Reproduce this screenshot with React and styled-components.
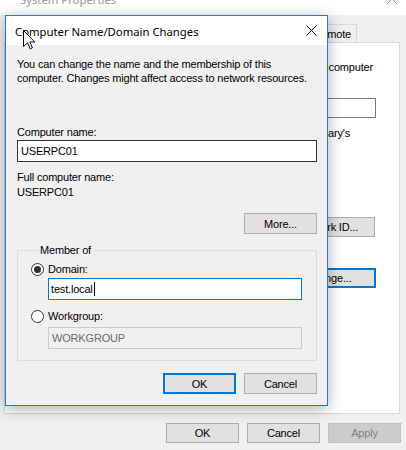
import React from "react";
import styled, { createGlobalStyle } from "styled-components";

const GlobalStyle = createGlobalStyle`
  html, body {
    margin: 0;
    padding: 0;
    background: #f0f0f0;
    overflow: hidden;
  }
  * {
    box-sizing: border-box;
  }
`;

const dlgFont = `"Liberation Sans", Arial, sans-serif`;
const titleFont = `"Noto Sans", "Open Sans", sans-serif`;

const Desktop = styled.div`
  position: relative;
  width: 406px;
  height: 450px;
  overflow: hidden;
  font-family: ${dlgFont};
  font-size: 11px;
  letter-spacing: -0.18px;
  color: #000;
`;

/* ---------- background window: System Properties ---------- */

const BackWindow = styled.div`
  position: absolute;
  left: 0;
  top: -15px;
  width: 406px;
  height: 465px;
  display: flex;
  flex-direction: column;
  background: #f0f0f0;
`;

const BackTitleBar = styled.div`
  height: 30px;
  flex: none;
  background: #fff;
  display: flex;
  align-items: center;
  justify-content: space-between;
  padding: 0 8px 0 20px;
  font-family: ${titleFont};
  font-size: 11.3px;
  letter-spacing: 0;
  color: #9a9a9a;
  line-height: 1;
`;

const BackBody = styled.div`
  flex: 1;
  display: flex;
  flex-direction: column;
  padding: 9px 0 0 4px;
`;

const TabStrip = styled.div`
  display: flex;
  justify-content: flex-end;
  width: 396px;
  padding-right: 43px;
  height: 18px;
  overflow: hidden;
  position: relative;
  z-index: 1;
`;

const Tab = styled.div`
  height: 19px;
  padding: 0 5px;
  border: 1px solid #d9d9d9;
  border-bottom: none;
  margin-left: -1px;
  background: #f0f0f0;
  display: flex;
  align-items: center;
  white-space: nowrap;
  flex: none;
`;

const TabPanel = styled.div`
  width: 396px;
  height: 372px;
  background: #fff;
  border: 1px solid #d9d9d9;
  display: flex;
  flex-direction: column;
  align-items: flex-end;
  padding: 17px 23px 0 0;
`;

const PanelText = styled.div`
  line-height: 14px;
  white-space: nowrap;
  margin-right: ${(p) => p.$mr || 0}px;
  margin-top: ${(p) => p.$mt || 0}px;
`;

const PanelInput = styled.div`
  width: 240px;
  height: 20px;
  margin-top: 24px;
  border: 1px solid #7a7a7a;
  background: #fff;
`;

const Button = styled.div`
  width: ${(p) => p.$w || 73}px;
  height: ${(p) => p.$h || 21}px;
  flex: none;
  margin-top: ${(p) => p.$mt || 0}px;
  margin-right: ${(p) => p.$mr || 0}px;
  border: ${(p) => (p.$default ? "2px" : "1px")} solid
    ${(p) => (p.$disabled ? "#bfbfbf" : p.$default ? "#0078d7" : "#adadad")};
  background: ${(p) => (p.$disabled ? "#cccccc" : "#e1e1e1")};
  color: ${(p) => (p.$disabled ? "#838383" : "#000")};
  display: flex;
  align-items: center;
  justify-content: center;
  white-space: nowrap;
`;

const BackButtons = styled.div`
  display: flex;
  justify-content: flex-end;
  gap: 8px;
  margin-top: 9px;
  padding-right: 5px;
`;

/* ---------- front dialog ---------- */

const Dialog = styled.div`
  position: absolute;
  left: 5px;
  top: 15px;
  width: 323px;
  height: 391px;
  border: 1px solid #1a7fd4;
  background: #f0f0f0;
  box-shadow: 0 3px 14px rgba(0, 0, 0, 0.32);
  display: flex;
  flex-direction: column;
  z-index: 2;
`;

const TitleBar = styled.div`
  height: 29px;
  flex: none;
  background: #fff;
  display: flex;
  align-items: center;
  justify-content: space-between;
  padding: 0 10px 0 9px;
`;

const TitleText = styled.span`
  font-family: ${titleFont};
  font-size: 11.3px;
  letter-spacing: 0;
  color: #000;
  margin-top: 1px;
`;

const CloseButton = styled.div`
  width: 12px;
  height: 12px;
  display: flex;
  align-items: center;
  justify-content: center;
  margin-top: -1px;
`;

const DialogBody = styled.div`
  flex: 1;
  display: flex;
  flex-direction: column;
  padding: 12px 10px 0 11px;
`;

const Text = styled.div`
  line-height: 14px;
  white-space: nowrap;
  margin-top: ${(p) => p.$mt || 0}px;
`;

const TextBox = styled.div`
  height: 22px;
  width: ${(p) => p.$w || 300}px;
  margin-top: ${(p) => p.$mt || 0}px;
  margin-left: ${(p) => p.$ml || 0}px;
  border: 1px solid
    ${(p) => (p.$focus ? "#0078d7" : p.$disabled ? "#cccccc" : "#333333")};
  background: ${(p) => (p.$disabled ? "#f0f0f0" : "#fff")};
  color: ${(p) => (p.$disabled ? "#6d6d6d" : "#000")};
  display: flex;
  align-items: center;
  padding-left: ${(p) => p.$pl || 3}px;
  white-space: nowrap;
`;

const Caret = styled.span`
  display: inline-block;
  width: 1px;
  height: 14px;
  background: #000;
  margin-left: 1px;
`;

const RightRow = styled.div`
  display: flex;
  justify-content: flex-end;
  gap: 8px;
  margin-top: ${(p) => p.$mt || 0}px;
`;

const GroupBox = styled.fieldset`
  margin: 9px 0 0;
  padding: 0 0 11px 13px;
  border: 1px solid #dcdcdc;
  width: 300px;
  min-width: 0;
`;

const Legend = styled.legend`
  padding: 0 2px;
  margin-left: 7px;
  line-height: 14px;
`;

const RadioRow = styled.div`
  display: flex;
  align-items: center;
  height: 14px;
  margin-top: ${(p) => p.$mt || 0}px;
`;

const RadioCircle = styled.span`
  width: 13px;
  height: 13px;
  border-radius: 50%;
  border: 1px solid #333;
  background: #fff;
  display: flex;
  align-items: center;
  justify-content: center;
  margin-right: 4px;
  flex: none;

  &::after {
    content: "";
    width: 7px;
    height: 7px;
    border-radius: 50%;
    background: ${(p) => (p.$checked ? "#333" : "transparent")};
  }
`;

const DialogButtons = styled(RightRow)`
  margin-top: 12px;
`;

const Cursor = styled.svg`
  position: absolute;
  left: 23px;
  top: 30px;
  z-index: 3;
`;

export default function App() {
  return (
    <>
      <GlobalStyle />
      <Desktop>
        <BackWindow>
          <BackTitleBar>
            <span>System Properties</span>
            <svg width="12" height="12" viewBox="0 0 12 12" style={{ marginTop: "-2px" }}>
              <path d="M1 1 L11 11 M11 1 L1 11" stroke="#8a8a8a" strokeWidth="1" />
            </svg>
          </BackTitleBar>
          <BackBody>
            <TabStrip>
              <Tab>Advanced</Tab>
              <Tab>System Protection</Tab>
              <Tab>Remote</Tab>
            </TabStrip>
            <TabPanel>
              <PanelText $mr={3}>to identify your computer</PanelText>
              <PanelInput />
              <PanelText $mr={26} $mt={8}>
                or "Mary's
              </PanelText>
              <Button $w={95} $h={20} $mt={77} $mr={1}>
                Network ID...
              </Button>
              <Button $w={95} $h={20} $mt={31} $default>
                Change...
              </Button>
            </TabPanel>
            <BackButtons>
              <Button $h={20}>OK</Button>
              <Button $h={20}>Cancel</Button>
              <Button $h={20} $disabled>
                Apply
              </Button>
            </BackButtons>
          </BackBody>
        </BackWindow>

        <Dialog>
          <TitleBar>
            <TitleText>Computer Name/Domain Changes</TitleText>
            <CloseButton>
              <svg width="11" height="11" viewBox="0 0 11 11">
                <path d="M0.5 0.5 L10.5 10.5 M10.5 0.5 L0.5 10.5" stroke="#000" strokeWidth="1" />
              </svg>
            </CloseButton>
          </TitleBar>
          <DialogBody>
            <Text>You can change the name and the membership of this</Text>
            <Text>computer. Changes might affect access to network resources.</Text>

            <Text $mt={40}>Computer name:</Text>
            <TextBox $mt={1}>USERPC01</TextBox>

            <Text $mt={8}>Full computer name:</Text>
            <Text $mt={1}>USERPC01</Text>

            <RightRow $mt={14}>
              <Button>More...</Button>
            </RightRow>

            <GroupBox>
              <Legend>Member of</Legend>
              <RadioRow $mt={5}>
                <RadioCircle $checked />
                Domain:
              </RadioRow>
              <TextBox $w={254} $ml={17} $mt={2} $pl={2} $focus>
                test.local
                <Caret />
              </TextBox>
              <RadioRow $mt={9}>
                <RadioCircle />
                Workgroup:
              </RadioRow>
              <TextBox $w={254} $ml={17} $mt={4} $disabled>
                WORKGROUP
              </TextBox>
            </GroupBox>

            <DialogButtons>
              <Button $default>OK</Button>
              <Button>Cancel</Button>
            </DialogButtons>
          </DialogBody>
        </Dialog>

        <Cursor width="13" height="20" viewBox="0 0 13 20">
          <path
            d="M0.5 0.5 L0.5 16.5 L4.5 12.8 L7.2 18.8 L9.4 17.8 L6.8 12 L11.8 12 Z"
            fill="#fff"
            stroke="#000"
            strokeWidth="1"
            strokeLinejoin="miter"
          />
        </Cursor>
      </Desktop>
    </>
  );
}
